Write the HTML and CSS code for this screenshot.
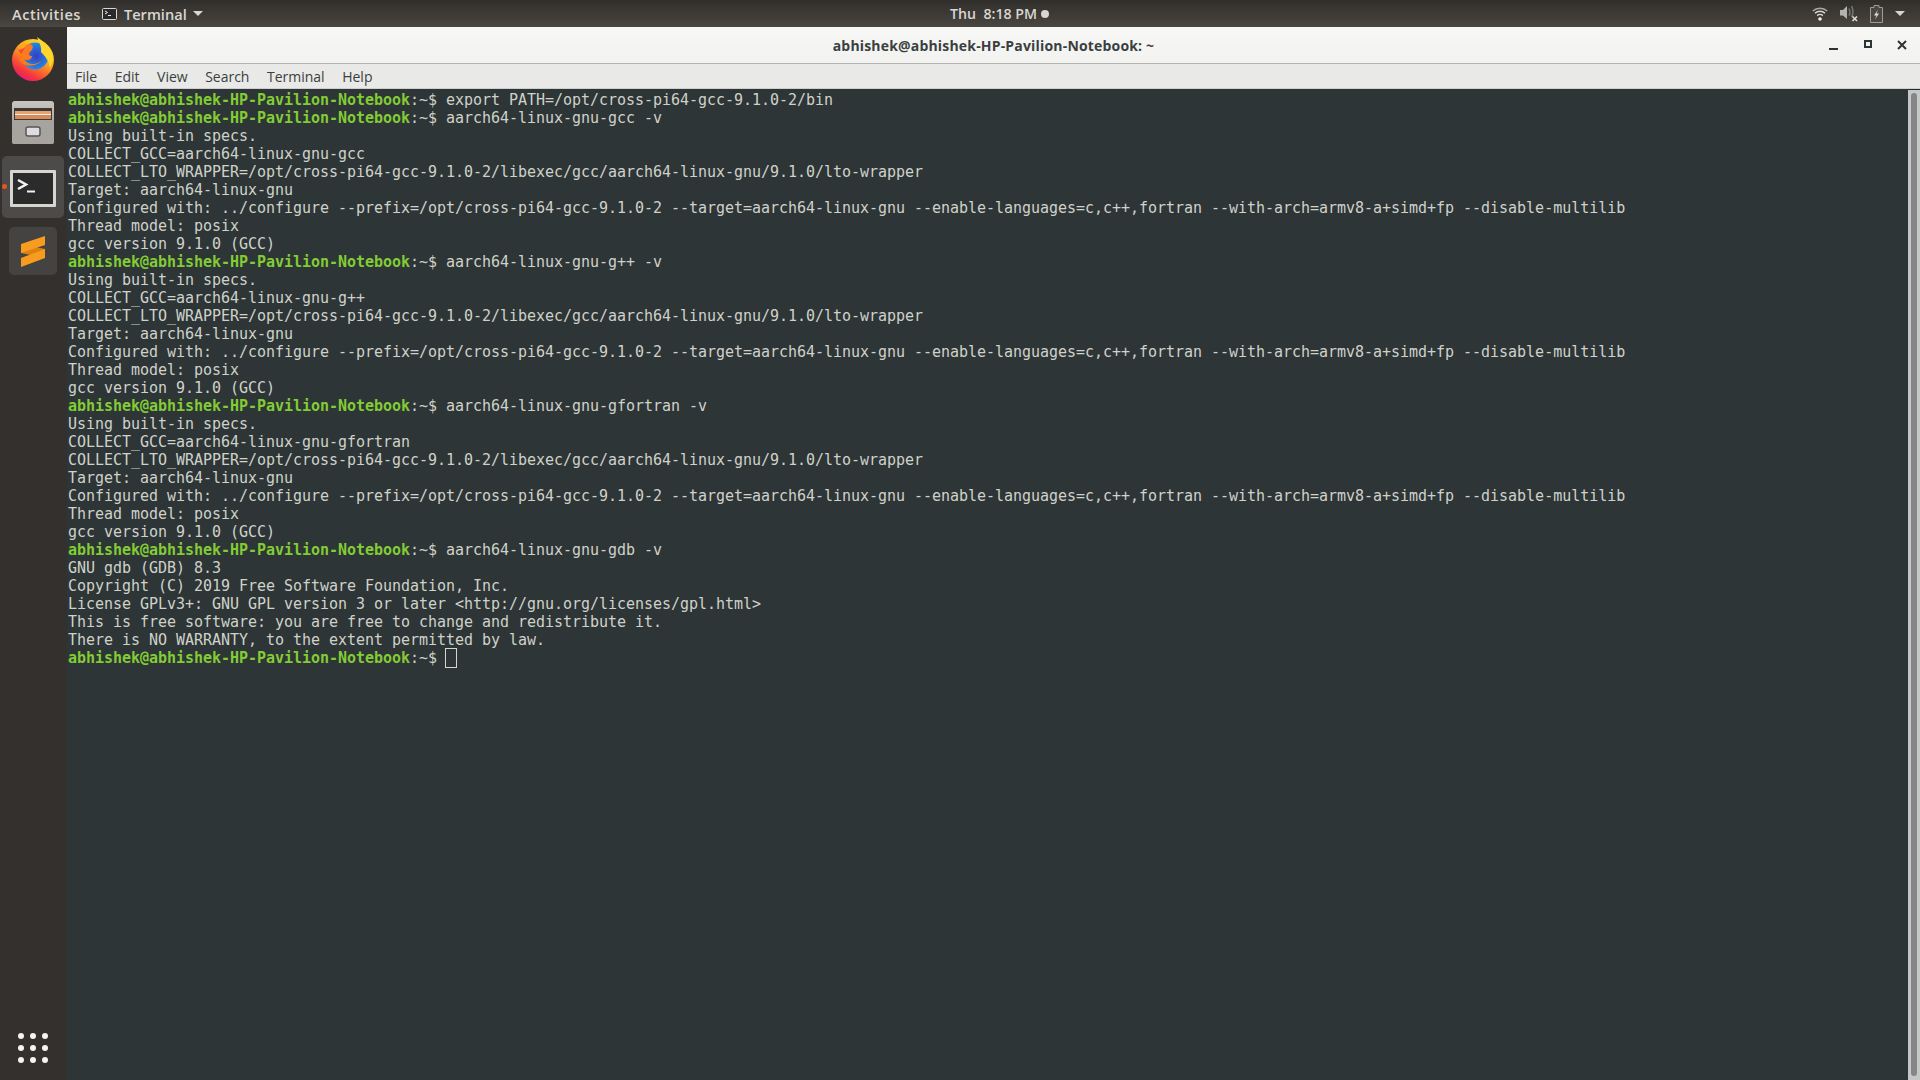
FILE: index.html
```html
<!DOCTYPE html>
<html lang="en">
<head>
<meta charset="utf-8">
<title>Terminal</title>
<link rel="stylesheet" href="styles.css">
</head>
<body>
<header class="topbar">
  <div class="top-left">
    <span class="activities">Activities</span>
    <svg class="app-ic" width="15" height="12" viewBox="0 0 15 12"><rect x="0.5" y="0.500" width="14" height="11" rx="1" fill="#2a2a2a" stroke="#d8d6d2"/><path d="M3 3l2.500 1.500L3 6" fill="none" stroke="#eee"/><path d="M6 7.500h3" stroke="#eee"/></svg>
    <span class="appname">Terminal</span>
    <span class="caret"></span>
  </div>
  <div class="clock">Thu&nbsp;&nbsp;8:18 PM<span class="dot"></span></div>
  <div class="tray">
    <svg width="16" height="15" viewBox="0 0 16 15"><path d="M.8 5a10.500 10.500 0 0 1 14.400 0" fill="none" stroke="#aaa8a4" stroke-width="1.500"/><path d="M3 7.300a7.300 7.300 0 0 1 10 0" fill="none" stroke="#d8d6d2" stroke-width="1.500"/><path d="M5.200 9.600a4 4 0 0 1 5.600 0" fill="none" stroke="#d8d6d2" stroke-width="1.500"/><circle cx="8" cy="13" r="1.800" fill="#eee"/></svg>
    <svg width="18" height="17" viewBox="0 0 18 17"><path d="M0 5h3l4-4v13l-4-3.500H0z" fill="#b5b3af"/><path d="M9 3.500q2 4 0 7M11.500 1q3 6 0 11" fill="none" stroke="#7a7873" stroke-width="1.500"/><path d="M12.500 11.500l4.500 4.500M17 11.500L12.500 16" stroke="#ddd" stroke-width="1.600"/></svg>
    <svg width="13" height="18" viewBox="0 0 13 18"><path d="M4 .5h5v2h3.500v15H.5v-15H4z" fill="#4a4742" stroke="#9d9b97"/><path d="M8 4.500L4 10.500h2.500L5 14.500l4-6H6.500z" fill="#ddd"/></svg>
    <span class="caret"></span>
  </div>
</header>
<div class="desk">
  <nav class="dock">
    <div class="dock-item">
      <svg width="46" height="46" viewBox="0 0 46 46">
        <defs>
          <linearGradient id="fx" x1="0.8" y1="0" x2="0.2" y2="1"><stop offset="0" stop-color="#ffe226"/><stop offset="0.45" stop-color="#ff9a1f"/><stop offset="0.8" stop-color="#f5333f"/><stop offset="1" stop-color="#e31587"/></linearGradient>
          <radialGradient id="gl" cx="0.55" cy="0.5" r="0.6"><stop offset="0" stop-color="#3a3dc0"/><stop offset="0.7" stop-color="#1f7fe0"/><stop offset="1" stop-color="#30a5ee"/></radialGradient>
        </defs>
        <circle cx="23" cy="24" r="21" fill="url(#fx)"/>
        <circle cx="25" cy="20" r="13.500" fill="url(#gl)"/>
        <path d="M27 1c5 4 15 9 16 20 0 6-2 9-3 11-1-8-6-13-9-16 1-5-2-10-4-15z" fill="#ffd62b"/>
        <path d="M12 15c3-5 5-7 7-7 6 1 4 5 1 8-2 2-1 4 2 4 0 4-6 5-8 3 3 6 13 7 18 1-3 5-13 8-20 3-4-4-4-9 0-12z" fill="#ff7a1c"/>
        <path d="M5 9l4 5 6-2-4 6z" fill="#f5473a"/>
      </svg>
    </div>
    <div class="dock-item">
      <svg width="44" height="46" viewBox="0 0 44 46">
        <defs><linearGradient id="cab" x1="0" y1="0" x2="0" y2="1"><stop offset="0" stop-color="#c9c6c1"/><stop offset="1" stop-color="#8f8c88"/></linearGradient></defs>
        <rect x="1" y="1" width="42" height="43" rx="3" fill="url(#cab)"/>
        <rect x="3" y="8" width="38" height="17" fill="#3b3836"/>
        <rect x="4" y="11" width="36" height="3" fill="#e9a06a"/>
        <rect x="4" y="14" width="36" height="1.500" fill="#fbeee0"/>
        <rect x="4" y="15.500" width="36" height="3.500" fill="#d98b55"/>
        <rect x="1" y="20" width="42" height="24" rx="2" fill="#a7a4a0"/>
        <rect x="15" y="27" width="14" height="9" rx="2" fill="#ddd" stroke="#555" stroke-width="1.500"/>
      </svg>
    </div>
    <div class="dock-item active">
      <span class="pip"></span>
      <div class="term-ic"><svg viewBox="0 0 40 31"><path d="M5 7l8 4.500-8 4.500" fill="none" stroke="#f2f2f2" stroke-width="2.500"/><path d="M14 18.500h8" stroke="#f2f2f2" stroke-width="2"/></svg></div>
    </div>
    <div class="dock-item tile">
      <svg width="24" height="31" viewBox="0 0 24 31"><path d="M0 8l24 5v9L0 17z" fill="#d9820f"/><path d="M0 8L24 0v9L0 17z" fill="#f89c20"/><path d="M0 22l24-9v9L0 31z" fill="#f89c20"/></svg>
    </div>
    <div class="apps">
      <i></i><i></i><i></i><i></i><i></i><i></i><i></i><i></i><i></i>
    </div>
  </nav>
  <main class="window">
    <div class="titlebar">
      <span class="title">abhishek@abhishek-HP-Pavilion-Notebook: ~</span>
      <div class="controls">
        <svg width="10" height="4" viewBox="0 0 10 4"><rect y="1" width="9" height="2" fill="#2e3436"/></svg>
        <svg width="8" height="8" viewBox="0 0 8 8"><path d="M1 1h6v6H1z" fill="none" stroke="#2e3436" stroke-width="2"/></svg>
        <svg width="10" height="10" viewBox="0 0 10 10"><path d="M1 1l8 8M9 1l-8 8" stroke="#2e3436" stroke-width="2"/></svg>
      </div>
    </div>
    <div class="menubar">
      <span>File</span><span>Edit</span><span>View</span><span>Search</span><span>Terminal</span><span>Help</span>
    </div>
    <div class="term-wrap">
      <div class="term">
        <div class="line"><span class="p">abhishek@abhishek-HP-Pavilion-Notebook</span>:~$ export PATH=/opt/cross-pi64-gcc-9.1.0-2/bin</div>
        <div class="line"><span class="p">abhishek@abhishek-HP-Pavilion-Notebook</span>:~$ aarch64-linux-gnu-gcc -v</div>
        <div class="line">Using built-in specs.</div>
        <div class="line">COLLECT_GCC=aarch64-linux-gnu-gcc</div>
        <div class="line">COLLECT_LTO_WRAPPER=/opt/cross-pi64-gcc-9.1.0-2/libexec/gcc/aarch64-linux-gnu/9.1.0/lto-wrapper</div>
        <div class="line">Target: aarch64-linux-gnu</div>
        <div class="line">Configured with: ../configure --prefix=/opt/cross-pi64-gcc-9.1.0-2 --target=aarch64-linux-gnu --enable-languages=c,c++,fortran --with-arch=armv8-a+simd+fp --disable-multilib</div>
        <div class="line">Thread model: posix</div>
        <div class="line">gcc version 9.1.0 (GCC)</div>
        <div class="line"><span class="p">abhishek@abhishek-HP-Pavilion-Notebook</span>:~$ aarch64-linux-gnu-g++ -v</div>
        <div class="line">Using built-in specs.</div>
        <div class="line">COLLECT_GCC=aarch64-linux-gnu-g++</div>
        <div class="line">COLLECT_LTO_WRAPPER=/opt/cross-pi64-gcc-9.1.0-2/libexec/gcc/aarch64-linux-gnu/9.1.0/lto-wrapper</div>
        <div class="line">Target: aarch64-linux-gnu</div>
        <div class="line">Configured with: ../configure --prefix=/opt/cross-pi64-gcc-9.1.0-2 --target=aarch64-linux-gnu --enable-languages=c,c++,fortran --with-arch=armv8-a+simd+fp --disable-multilib</div>
        <div class="line">Thread model: posix</div>
        <div class="line">gcc version 9.1.0 (GCC)</div>
        <div class="line"><span class="p">abhishek@abhishek-HP-Pavilion-Notebook</span>:~$ aarch64-linux-gnu-gfortran -v</div>
        <div class="line">Using built-in specs.</div>
        <div class="line">COLLECT_GCC=aarch64-linux-gnu-gfortran</div>
        <div class="line">COLLECT_LTO_WRAPPER=/opt/cross-pi64-gcc-9.1.0-2/libexec/gcc/aarch64-linux-gnu/9.1.0/lto-wrapper</div>
        <div class="line">Target: aarch64-linux-gnu</div>
        <div class="line">Configured with: ../configure --prefix=/opt/cross-pi64-gcc-9.1.0-2 --target=aarch64-linux-gnu --enable-languages=c,c++,fortran --with-arch=armv8-a+simd+fp --disable-multilib</div>
        <div class="line">Thread model: posix</div>
        <div class="line">gcc version 9.1.0 (GCC)</div>
        <div class="line"><span class="p">abhishek@abhishek-HP-Pavilion-Notebook</span>:~$ aarch64-linux-gnu-gdb -v</div>
        <div class="line">GNU gdb (GDB) 8.3</div>
        <div class="line">Copyright (C) 2019 Free Software Foundation, Inc.</div>
        <div class="line">License GPLv3+: GNU GPL version 3 or later &lt;http://gnu.org/licenses/gpl.html&gt;</div>
        <div class="line">This is free software: you are free to change and redistribute it.</div>
        <div class="line">There is NO WARRANTY, to the extent permitted by law.</div>
        <div class="line"><span class="p">abhishek@abhishek-HP-Pavilion-Notebook</span>:~$ <span class="cursor"></span></div>
      </div>
      <div class="scroll"><div class="thumb"></div></div>
    </div>
  </main>
</div>
</body>
</html>
```
FILE: styles.css
```css
* { box-sizing: border-box; }
html, body { height: 100%; }
body { margin: 0; width: 1920px; height: 1080px; overflow: hidden; display: flex; flex-direction: column; background: #2e3536; font-family: "Open Sans", "Noto Sans", sans-serif; }
.topbar { height: 27px; flex: none; position: relative; display: flex; align-items: center; justify-content: space-between; background: linear-gradient(#302e2b, #4a4641); color: #d8d6d2; font-size: 14.600px; font-weight: 600; padding: 0 15px 0 12px; }
.top-left { display: flex; align-items: center; }
.activities { margin-right: 21px; letter-spacing: 0.5px; }
.app-ic { margin-right: 7px; }
.caret { display: inline-block; width: 0; height: 0; border-left: 5px solid transparent; border-right: 5px solid transparent; border-top: 5px solid #d8d6d2; margin-left: 6px; }
.clock { position: absolute; left: 950px; top: 0; height: 27px; display: flex; align-items: center; font-size: 14.200px; }
.dot { width: 8px; height: 8px; border-radius: 50%; background: #d8d6d2; margin-left: 4px; }
.tray { display: flex; align-items: center; gap: 12px; }
.tray .caret { margin-left: 0; }
.desk { flex: 1; display: flex; min-height: 0; }
.dock { width: 67px; flex: none; background: #33302e; display: flex; flex-direction: column; align-items: center; padding: 1px 1px 0 0; }
.dock-item { width: 62px; height: 62px; margin-bottom: 2px; display: flex; align-items: center; justify-content: center; border-radius: 5px; position: relative; }
.active { background: #4d4b49; }
.pip { position: absolute; left: 0; top: 28px; width: 5px; height: 5px; border-radius: 50%; background: #e9531f; }
.term-ic { width: 46px; height: 37px; margin-top: 3px; background: #2b2b2b; border: 3px solid #d5d5d2; border-radius: 1px; }
.term-ic svg { display: block; width: 100%; height: 100%; }
.tile { width: 48px; height: 48px; background: #454341; margin-top: 7px; }
.apps { margin-top: auto; margin-bottom: 17px; display: grid; grid-template-columns: repeat(3, 6px); gap: 6px; }
.apps i { width: 6px; height: 6px; border-radius: 50%; background: #f4f4f2; }
.window { flex: 1; min-width: 0; display: flex; flex-direction: column; }
.titlebar { height: 37px; flex: none; position: relative; background: linear-gradient(#f7f7f6, #f2f2f1); border-bottom: 1px solid #b5b3af; display: flex; align-items: center; justify-content: center; }
.title { font-size: 14px; font-weight: 700; color: #3a3f41; letter-spacing: 0.18px; }
.controls { position: absolute; right: 0; top: 0; height: 100%; }
.controls svg { position: absolute; }
.controls svg:nth-child(1) { right: 81px; top: 20px; }
.controls svg:nth-child(2) { right: 48px; top: 13px; }
.controls svg:nth-child(3) { right: 13px; top: 13px; }
.menubar { height: 25px; flex: none; background: #e9e9e7; border-bottom: 1px solid #cfcfcd; display: flex; align-items: center; padding-left: 8px; gap: 17.500px; font-size: 14px; color: #3a3f41; }
.term-wrap { flex: 1; min-height: 0; position: relative; background: #2e3536; }
.term { padding: 2px 0 0 1px; font-family: "DejaVu Sans Mono", monospace; font-size: 15px; color: #ced2ca; letter-spacing: -0.03px; }
.line { height: 18px; line-height: 18px; white-space: pre; }
.p { color: #82cc35; font-weight: 700; }
.cursor { display: inline-block; width: 12px; height: 20px; margin: -1px 0 -1px -1px; border: 1px solid #d3d7cf; vertical-align: top; }
.scroll { position: absolute; right: 0; top: 0; bottom: 0; width: 12px; background: #c6c8c7; border-top: 1px solid #25292a; padding: 3px 3px 4px; }
.thumb { height: 100%; background: #848786; border-radius: 3px; }
```
